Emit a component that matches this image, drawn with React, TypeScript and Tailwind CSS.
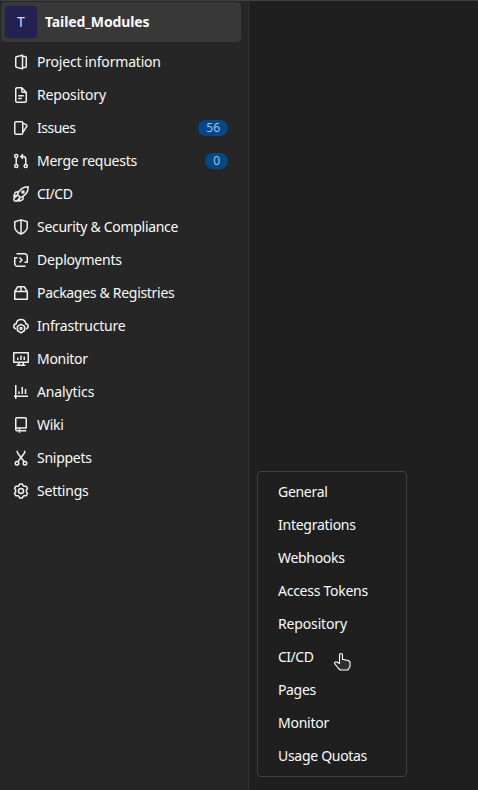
import type { ReactNode } from "react";

type Item = { label: string; icon: ReactNode; badge?: string; tracking: string };

const items: Item[] = [
  {
    label: "Project information",
    tracking: "tracking-[-0.19px]",
    icon: (
      <>
        <path d="M9.5 1.1 3.4 2.8a.9.9 0 0 0-.65.85v8.7c0 .4.25.75.65.85l6.1 1.7z" />
        <path d="M9.5 2.5h2.75a1 1 0 0 1 1 1v9a1 1 0 0 1-1 1H9.5" />
      </>
    ),
  },
  {
    label: "Repository",
    tracking: "tracking-[-0.15px]",
    icon: (
      <>
        <path d="M8.75.75H4A1.250 1.250 0 0 0 2.750 2v12c0 .7.55 1.25 1.25 1.25h8c.7 0 1.25-.55 1.25-1.25V5.25z" />
        <path d="M8.75 1v3.25c0 .55.45 1 1 1H13M5.25 8.75h5.5M5.25 11.5h3.5" />
      </>
    ),
  },
  {
    label: "Issues",
    badge: "56",
    tracking: "tracking-[-0.5px]",
    icon: (
      <>
        <rect x="1.75" y="1.75" width="8" height="12.5" rx="1.25" />
        <path d="M9.75 3.3h.7l3 1.500a1 1 0 0 1 .45 1.300L10 12.200" />
      </>
    ),
  },
  {
    label: "Merge requests",
    badge: "0",
    tracking: "tracking-[-0.25px]",
    icon: (
      <>
        <circle cx="3.25" cy="3" r="1.6" />
        <circle cx="3.25" cy="13" r="1.6" />
        <circle cx="12.75" cy="13" r="1.6" />
        <path d="M3.25 4.6v6.8M12.75 11.4V6a2.5 2.5 0 0 0-2.5-2.500H8M10 1.200 7.800 3.500 10 5.800" />
      </>
    ),
  },
  {
    label: "CI/CD",
    tracking: "tracking-[-0.5px]",
    icon: (
      <>
        <path d="M4.4 8.500C6 4.500 9 .75 15.250.75 15.250 7 11.500 10 7.500 11.600z" />
        <path d="M5.600 5.700 2.400 6.200.8 10l3.500-.5M10.300 10.400l-.5 3.200L6 15.200l.5-3.500M4.300 9.600.8 12.200l.5 2.500 2.500.5 2.700-3.300" />
        <circle cx="10" cy="6" r="1.100" />
      </>
    ),
  },
  {
    label: "Security & Compliance",
    tracking: "tracking-[-0.3px]",
    icon: <path d="M8 .9 1.750 2.750V8c0 3.500 3 5.600 6.250 7.200 3.250-1.600 6.250-3.700 6.250-7.200V2.750zM8 1v14" />,
  },
  {
    label: "Deployments",
    tracking: "tracking-[-0.2px]",
    icon: (
      <>
        <path d="M3.500 1.750h8a2.750 2.750 0 0 1 2.750 2.750v5.750h-2.750M12.500 14.250h-8a2.750 2.750 0 0 1-2.750-2.750V5.750H4.500" />
        <path d="m6.500 5.500 2.500 2.500-2.500 2.500" />
      </>
    ),
  },
  {
    label: "Packages & Registries",
    tracking: "tracking-[-0.3px]",
    icon: <path d="M1.750 6.500h12.500v7.750H1.750zM1.750 6.500l3-4.750h6.500l3 4.750M8 1.750v4.750" />,
  },
  {
    label: "Infrastructure",
    tracking: "tracking-[-0.22px]",
    icon: (
      <>
        <path d="M3.200 10.700A2.500 2.500 0 0 1 .8 8.300c0-1.400 1-2.300 2.400-2.500C3.500 3.200 5.500 1.500 8 1.500s4.500 1.700 4.800 4.300c1.400.2 2.400 1.100 2.400 2.500a2.500 2.500 0 0 1-2.400 2.400" />
        <path d="m8 6.300 3.600 2v4.200L8 14.800l-3.600-2.300V8.300z" />
        <circle cx="8" cy="10.500" r="1.100" strokeWidth="1.300" />
      </>
    ),
  },
  {
    label: "Monitor",
    tracking: "tracking-[-0.3px]",
    icon: (
      <>
        <rect x=".75" y="1.750" width="14.500" height="9.500" />
        <path d="M4.750 6.500V9M8 4.500V9M11.250 5.500V9M5.750 11.500v2.750M10.250 11.500v2.750M3.500 14.250h9" />
      </>
    ),
  },
  {
    label: "Analytics",
    tracking: "tracking-[-0.12px]",
    icon: <path d="M2.750 1v14M1 12.250h14M6 7.500V10M9.250 3v7M12.500 5v5" />,
  },
  {
    label: "Wiki",
    tracking: "tracking-[-0.3px]",
    icon: (
      <>
        <path d="M13.250 11.250V1.750a1 1 0 0 0-1-1h-8.500a1 1 0 0 0-1 1v10.750c0 .8.5 1.250 1.250 1.250h9.250M3 11.750c.2-.4.7-.75 1.500-.75h8.750" />
        <path d="M6.500 11v4.750" />
      </>
    ),
  },
  {
    label: "Snippets",
    tracking: "tracking-[-0.26px]",
    icon: (
      <>
        <circle cx="4" cy="13.250" r="1.750" />
        <circle cx="12" cy="13.250" r="1.750" />
        <path d="m4 .75.7 2.500L11.200 11.700M12 .75l-.7 2.500L4.800 11.700" />
      </>
    ),
  },
  {
    label: "Settings",
    tracking: "tracking-[-0.22px]",
    icon: (
      <>
        <path d="M6.800.9h2.400l.9 1.800 1 .6 2-.1 1.400 2.100L13.400 7v2l1.100 1.700-1.400 2.100-2-.1-1 .6-.9 1.800H6.800l-.9-1.800-1-.6-2 .1-1.400-2.100L2.600 9V7L1.500 5.300l1.400-2.100 2 .1 1-.6z" />
        <circle cx="8" cy="8" r="2.500" />
      </>
    ),
  },
];

const submenu = [
  { label: "General", tracking: "tracking-[-0.3px]" },
  { label: "Integrations", tracking: "tracking-[-0.26px]" },
  { label: "Webhooks", tracking: "tracking-[-0.3px]" },
  { label: "Access Tokens", tracking: "tracking-[-0.26px]" },
  { label: "Repository", tracking: "tracking-[-0.15px]" },
  { label: "CI/CD", tracking: "tracking-[-0.5px]" },
  { label: "Pages", tracking: "tracking-[-0.35px]" },
  { label: "Monitor", tracking: "tracking-[-0.25px]" },
  { label: "Usage Quotas", tracking: "tracking-[-0.3px]" },
];

export default function App() {
  return (
    <div className="relative flex h-[790px] w-full overflow-hidden border-t border-[#404040] bg-[#1f1f1f] font-['Noto_Sans','Open_Sans',sans-serif] text-sm text-[#fafafa]">
      <aside className="w-[249px] shrink-0 border-r border-[#303030] bg-[#262626] pl-px pr-[7px] pt-px">
        <a className="flex h-10 items-center rounded bg-[#383838] pl-1">
          <span className="flex size-8 items-center justify-center rounded bg-[#232150] text-[#dbdbf8]">T</span>
          <span className="ml-2 whitespace-nowrap font-bold tracking-[-0.12px]">Tailed_Modules</span>
        </a>
        <ul className="pt-[3px]">
          {items.map((item) => (
            <li key={item.label} className="flex h-[33px] items-center pl-3 pr-[13px]">
              <svg
                viewBox="0 0 16 16"
                className="size-4 shrink-0 text-[#f0f0f0]"
                fill="none"
                stroke="currentColor"
                strokeWidth="1.5"
                strokeLinejoin="round"
              >
                {item.icon}
              </svg>
              <span className={`ml-2 whitespace-nowrap ${item.tracking}`}>{item.label}</span>
              {item.badge && (
                <span className="ml-auto flex h-4 items-center rounded-full bg-[#064787] px-2 text-xs text-[#9dc7f1]">
                  {item.badge}
                </span>
              )}
            </li>
          ))}
        </ul>
      </aside>

      <ul className="absolute left-[257px] top-[470px] h-[306px] w-[150px] rounded border border-[#404040] bg-[#1f1f1f] pl-5 pt-[3px]">
        {submenu.map((item) => (
          <li key={item.label} className={`flex h-[33px] items-center whitespace-nowrap ${item.tracking}`}>
            {item.label}
          </li>
        ))}
      </ul>

      <svg viewBox="0 0 18 20" className="absolute left-[333px] top-[651px] h-5 w-[18px]">
        <path
          d="M6.500 11.500V3a1.500 1.500 0 0 1 3 0v4.500h1.500l1 .5h1.500l1 .5h1l1.500 1.500v4.500l-1.500 2.500-1 1H7.500l-2-1.500-4-5 .5-1.500h2z"
          fill="#303030"
          stroke="#ffffff"
          strokeWidth="1.1"
          strokeLinejoin="round"
        />
      </svg>
    </div>
  );
}
